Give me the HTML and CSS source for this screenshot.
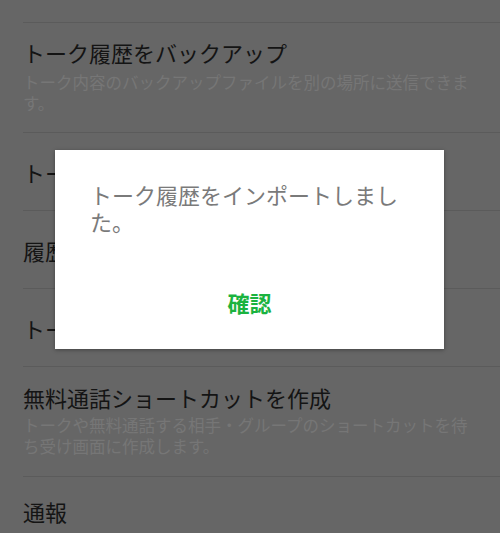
FILE: index.html
```html
<!DOCTYPE html>
<html lang="ja">
<head>
<meta charset="utf-8">
<link rel="stylesheet" href="styles.css">
</head>
<body>
<div class="screen">
  <div class="list">
    <div class="top-spacer"></div>
    <div class="item item-two first">
      <div class="title">トーク履歴をバックアップ</div>
      <div class="sub">トーク内容のバックアップファイルを別の場所に送信できます。</div>
    </div>
    <div class="item item-one">
      <div class="title">トーク履歴をインポート</div>
    </div>
    <div class="item item-one">
      <div class="title">履歴をすべて削除</div>
    </div>
    <div class="item item-one">
      <div class="title">トークの背景画像</div>
    </div>
    <div class="item item-two second">
      <div class="title">無料通話ショートカットを作成</div>
      <div class="sub">トークや無料通話する相手・グループのショートカットを待ち受け画面に作成します。</div>
    </div>
    <div class="item item-last">
      <div class="title">通報</div>
    </div>
  </div>
  <div class="dialog">
    <div class="message">トーク履歴をインポートしました。</div>
    <div class="button">確認</div>
  </div>
</div>
</body>
</html>
```
FILE: styles.css
```css
html, body {
  margin: 0;
  padding: 0;
}
body {
  background: #666666;
  font-family: "Noto Sans CJK JP", "Noto Sans", sans-serif;
  width: 500px;
  height: 533px;
  overflow: hidden;
}
.screen {
  position: relative;
  width: 500px;
  height: 533px;
  overflow: hidden;
}
.list {
  display: flex;
  flex-direction: column;
}
.top-spacer {
  height: 22px;
}
.item {
  margin-left: 23px;
  border-top: 1px solid #5b5b5b;
  display: flex;
  flex-direction: column;
}
.title {
  font-size: 22px;
  line-height: 28px;
  color: #141414;
  white-space: nowrap;
}
.sub {
  font-size: 16.5px;
  line-height: 21px;
  color: #767676;
  padding-right: 27px;
}
.item-two.first {
  padding: 15px 0 18px;
}
.item-two.first .sub {
  margin-top: 6px;
}
.item-two.second {
  padding: 16px 0 19px;
}
.item-two.second .sub {
  margin-top: 4px;
}
.item-one {
  padding: 25px 0 24px;
}
.item-last {
  padding: 20px 0 20px;
}
.dialog {
  position: absolute;
  left: 55px;
  top: 150px;
  width: 389px;
  height: 199px;
  box-sizing: border-box;
  background: #ffffff;
  box-shadow: 0 1px 4px rgba(0, 0, 0, 0.35);
  padding: 31px 35px 0;
  display: flex;
  flex-direction: column;
}
.message {
  font-size: 22px;
  line-height: 27px;
  color: #7a7a7a;
}
.button {
  margin-top: 53px;
  align-self: center;
  font-size: 22px;
  line-height: 28px;
  font-weight: 700;
  color: #1bb33f;
}
```
